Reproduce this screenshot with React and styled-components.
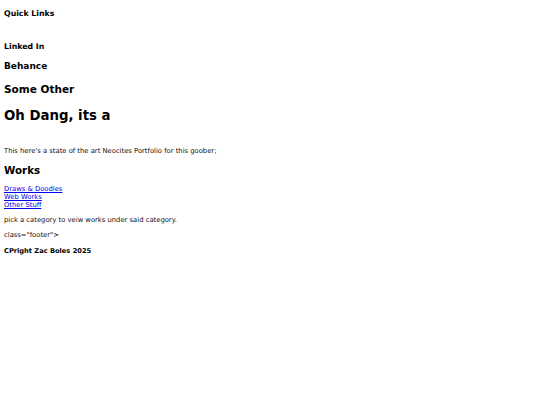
import React from "react";
import styled, { createGlobalStyle } from "styled-components";

const Global = createGlobalStyle`
  html, body { margin: 0; padding: 0; background: #fff; }
  body { font-family: "DejaVu Sans", Verdana, sans-serif; color: #000; }
`;

const Page = styled.div`
  display: flex;
  flex-direction: column;
  align-items: flex-start;
  padding: 0 4px;
`;

const Heading = styled.div`
  font-weight: bold;
  font-size: ${(p) => p.$size}px;
  line-height: ${(p) => p.$lh}px;
  margin-top: ${(p) => p.$mt}px;
`;

const Text = styled.p`
  margin: ${(p) => p.$mt}px 0 0;
  font-size: 6.8px;
  line-height: 8px;
  color: #111;
`;

const LinkList = styled.nav`
  display: flex;
  flex-direction: column;
  align-items: flex-start;
  margin-top: 9px;
`;

const Link = styled.a`
  font-size: 6.8px;
  line-height: 8px;
  color: #0000ee;
  text-decoration: underline;
`;

export default function App() {
  return (
    <>
      <Global />
      <Page>
        <Heading $size={7.8} $lh={9} $mt={8.5}>Quick Links</Heading>
        <Heading $size={7.8} $lh={9} $mt={24}>Linked In</Heading>
        <Heading $size={9} $lh={11} $mt={10}>Behance</Heading>
        <Heading $size={10.5} $lh={12} $mt={11.5}>Some Other</Heading>
        <Heading $size={13.3} $lh={16} $mt={12.5}>Oh Dang, its a</Heading>
        <Text $mt={23.5}>This here's a state of the art Neocites Portfolio for this goober;</Text>
        <Heading $size={10.3} $lh={12} $mt={9}>Works</Heading>
        <LinkList>
          <Link href="#">Draws &amp; Doodles</Link>
          <Link href="#">Web Works</Link>
          <Link href="#">Other Stuff</Link>
        </LinkList>
        <Text $mt={7}>pick a category to veiw works under said category.</Text>
        <Text $mt={7}>class="footer"&gt;</Text>
        <Heading $size={6.67} $lh={8} $mt={8}>CPright Zac Boles 2025</Heading>
      </Page>
    </>
  );
}
